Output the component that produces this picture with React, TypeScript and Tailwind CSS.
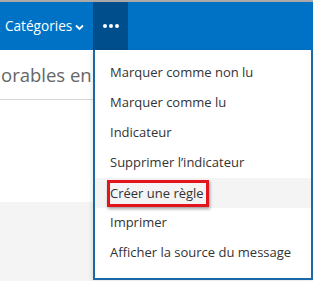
import React from 'react';

const items = [
  'Marquer comme non lu',
  'Marquer comme lu',
  'Indicateur',
  'Supprimer l’indicateur',
  'Créer une règle',
  'Imprimer',
  'Afficher la source du message',
];

export default function App() {
  return (
    <div
      className="relative w-[313px] h-[281px] overflow-hidden bg-white"
      style={{ fontFamily: '"Open Sans", "Noto Sans", sans-serif' }}
    >
      <div className="h-[2px] bg-[#a9a9a9]" />
      <div className="flex h-[48px] items-stretch bg-[#0072c6] text-white">
        <div className="flex w-[93px] items-center pl-[5px] text-[13.6px]">
          <span>Catégories</span>
          <svg className="ml-[3px] mt-[2px]" width="9" height="7" viewBox="0 0 9 7" fill="none">
            <path d="M1 1.5l3.5 3.5 3.5-3.5" stroke="white" strokeWidth="1.8" />
          </svg>
        </div>
        <div className="flex w-[35px] items-center justify-center gap-[2px] bg-[#004e8c]">
          <span className="h-[4px] w-[4px] rounded-full bg-white" />
          <span className="h-[4px] w-[4px] rounded-full bg-white" />
          <span className="h-[4px] w-[4px] rounded-full bg-white" />
        </div>
      </div>

      <div className="flex h-[50px] items-center border-b border-[#d6d6d6] pl-[1px] text-[18.5px] whitespace-nowrap text-[#666666]">
        <span>orables en</span>
      </div>
      <div className="h-[102px]" />
      <div className="h-[80px] bg-[#f4f4f4]" />

      <div className="absolute left-[93px] top-[50px] w-[220px] h-[230px] border-l-2 border-r-2 border-b-2 border-[#1b68a8] bg-white pt-[8px] shadow-[-2px_0_4px_rgba(0,0,0,0.08)]">
        {items.map((label) => {
          const active = label === 'Créer une règle';
          return (
            <div
              key={label}
              className={`flex h-[30px] items-center pl-[15px] text-[13px] text-[#333333] ${active ? 'bg-[#f4f4f4]' : ''}`}
            >
              {active ? (
                <span className="-ml-[3px] border-[3px] border-[#e3141b] pr-[2px] leading-[21px] shadow-[1px_2px_3px_rgba(0,0,0,0.35)]">
                  {label}
                </span>
              ) : (
                <span>{label}</span>
              )}
            </div>
          );
        })}
      </div>
    </div>
  );
}
